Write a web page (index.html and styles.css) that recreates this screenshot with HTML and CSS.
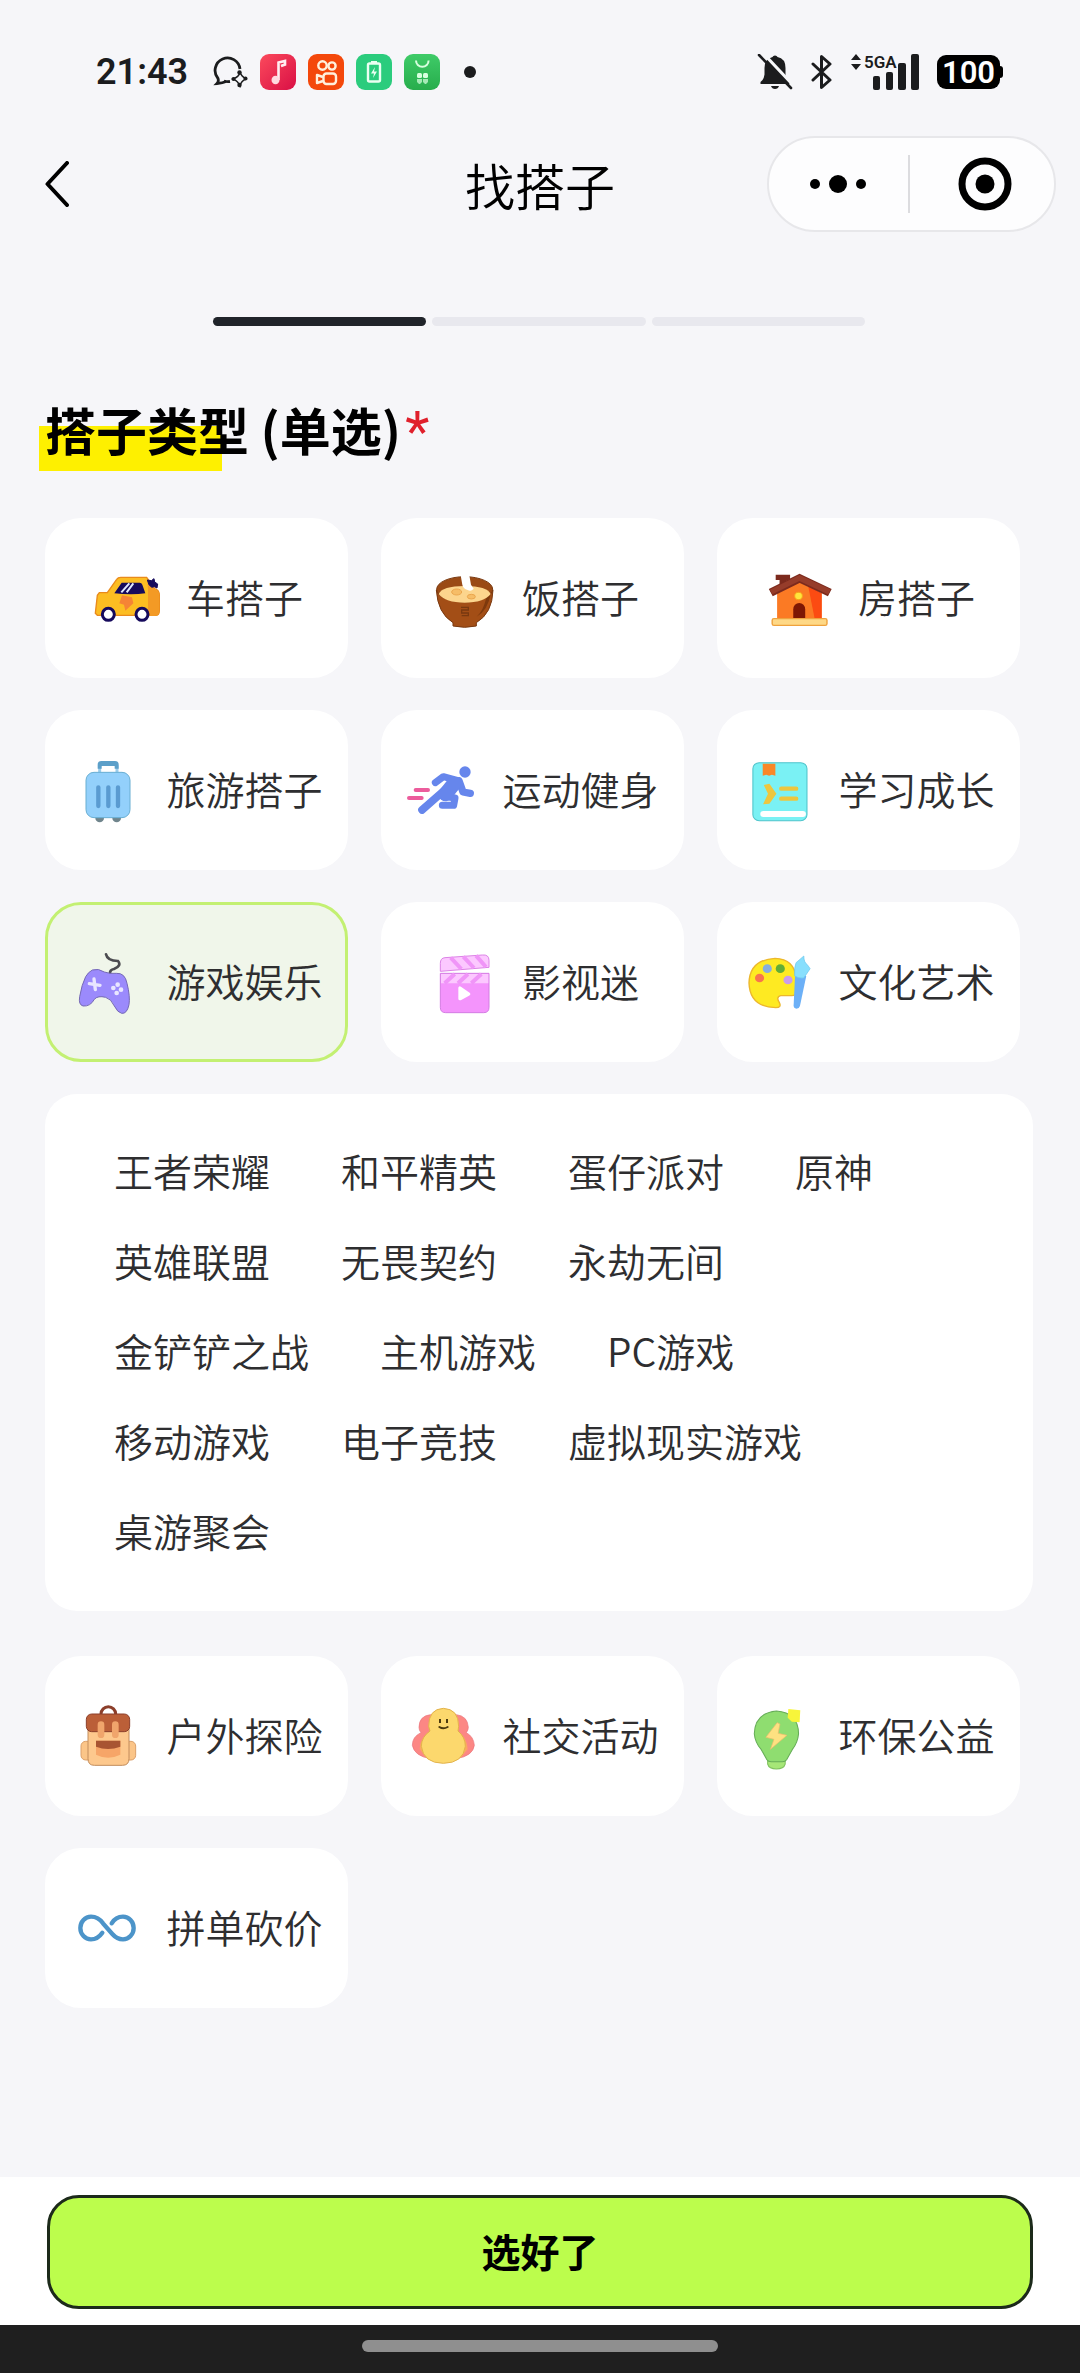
FILE: index.html
```html
<!DOCTYPE html>
<html lang="zh-CN">
<head>
<meta charset="utf-8">
<meta name="viewport" content="width=device-width, initial-scale=1">
<title>找搭子</title>
<link rel="stylesheet" href="styles.css">
</head>
<body>
<div class="status-bar">
  <div class="status-left">
    <span class="clock">21:43</span>
    <svg class="chat-icon" viewBox="0 0 36 32" aria-hidden="true"><path d="M14 25.500Q11 27 5 27.500Q7 25.500 6 22.500A12.500 12.500 0 1 1 28 13" fill="none" stroke="#1b1c1e" stroke-width="2.800"/><path d="M12 25q3 1 6 .500" fill="none" stroke="#1b1c1e" stroke-width="2.800"/><path d="M28 16q1 4 6 7q-5 2-6 7q-2-5-7-7q6-2 7-7z" fill="none" stroke="#1b1c1e" stroke-width="1.400"/><g fill="#1b1c1e"><circle cx="27.500" cy="16.500" r="2.200"/><circle cx="33.500" cy="22.500" r="2"/><circle cx="27.500" cy="29" r="2.200"/><circle cx="21.500" cy="23" r="2"/></g></svg>
    <svg class="app-icon" viewBox="0 0 36 36" aria-hidden="true"><defs><linearGradient id="music" x1="0" y1="0" x2="1" y2="1"><stop offset="0" stop-color="#fb4a5c"/><stop offset="1" stop-color="#d90f45"/></linearGradient></defs><rect width="36" height="36" rx="9" fill="url(#music)"/><path d="M18.500 26V8.500L25 7v3.500l-4 1.500" fill="none" stroke="#ffeef0" stroke-width="2.600"/><ellipse cx="15.500" cy="26" rx="4" ry="4.300" fill="#ffd9df"/></svg>
    <svg class="app-icon" viewBox="0 0 36 36" aria-hidden="true"><rect width="36" height="36" rx="9" fill="#f4480b"/><g fill="none" stroke="#fff0dc" stroke-width="2.400"><circle cx="14.500" cy="11.500" r="4.200"/><circle cx="24" cy="12" r="3.600"/><rect x="15.500" y="19.500" width="12.500" height="10.500" rx="3"/><path d="M15 23l-6-2v8l6-2" stroke-linejoin="round"/></g></svg>
    <svg class="app-icon" viewBox="0 0 36 36" aria-hidden="true"><rect width="36" height="36" rx="9" fill="#2bcc7d"/><rect x="12" y="9.500" width="12" height="18" rx="1.500" fill="none" stroke="#eafff2" stroke-width="2.400"/><path d="M15 7h6v2h-6z" fill="#eafff2"/><path d="M19 13l-4 6.500h3l-1 4.500 4-6.500h-3z" fill="#eafff2"/></svg>
    <svg class="app-icon" viewBox="0 0 36 36" aria-hidden="true"><defs><linearGradient id="bag" x1="0" y1="0" x2="0" y2="1"><stop offset="0" stop-color="#3fcb68"/><stop offset="1" stop-color="#27ad4c"/></linearGradient></defs><rect width="36" height="36" rx="9" fill="url(#bag)"/><path d="M12 6.500a6.300 6.300 0 0 0 12.600 0" fill="none" stroke="#d8ffdf" stroke-width="2"/><g fill="#d8ffdf"><rect x="13" y="19" width="5" height="5" rx="1.500"/><rect x="19" y="19" width="5" height="5" rx="1.500"/><path d="M13 25h5v3l-2 2h-1l-2-2zM19 25h5v3l-2 2h-1l-2-2z" opacity=".7"/></g></svg>
    <span class="more-dot"></span>
  </div>
  <div class="status-right">
    <svg class="bell-icon" viewBox="0 0 36 36" aria-hidden="true"><path d="M18 1.500q2 0 2.500 1.500q8 1.500 8 11v6.500q1 5 4 7.500v2H3.500v-2q3.500-2.500 4-7.500V14q0-9 8-11q.500-1.500 2.500-1.500z" fill="#1b1c1e"/><path d="M14 32h8q-1 3-4 3t-4-3z" fill="#1b1c1e"/><path d="M6-1L36 31" stroke="#f6f7f9" stroke-width="3"/><path d="M2 1L34 34" stroke="#1b1c1e" stroke-width="2.600" stroke-linecap="round"/></svg>
    <svg class="bluetooth-icon" viewBox="0 0 22 36" aria-hidden="true"><path d="M2 10l17 16-8.500 7.500V2.500L19 10 2 26" fill="none" stroke="#1b1c1e" stroke-width="3" stroke-linecap="round" stroke-linejoin="round"/></svg>
    <div class="signal">
      <svg class="traffic-icon" viewBox="0 0 10 16" aria-hidden="true"><path d="M5 0l5 6H0zM5 16l5-6H0z" fill="#1b1c1e"/></svg>
      <span class="network">5GA</span>
      <svg class="bars-icon" viewBox="0 0 46 36" aria-hidden="true"><g fill="#1b1c1e"><rect y="22" width="7" height="14" rx="2"/><rect x="13" y="18" width="7" height="18" rx="2"/><rect x="25" y="9" width="8" height="27" rx="2"/><rect x="38" width="8" height="36" rx="2"/></g></svg>
    </div>
    <span class="battery">100</span>
  </div>
</div>

<header class="nav-bar">
  <a class="back" href="#" aria-label="返回"><svg viewBox="0 0 24 46" aria-hidden="true"><path d="M22 2L2.500 23 22 44" fill="none" stroke="#000" stroke-width="4" stroke-linecap="round" stroke-linejoin="round"/></svg></a>
  <h1 class="page-title">找搭子</h1>
  <div class="capsule">
    <button class="capsule-button" type="button" aria-label="更多"><svg class="dots-icon" viewBox="0 0 58 20" aria-hidden="true"><circle cx="6" cy="10" r="5"/><circle cx="29" cy="10" r="9"/><circle cx="52" cy="10" r="5"/></svg></button>
    <button class="capsule-button" type="button" aria-label="关闭"><svg class="target-icon" viewBox="0 0 54 54" aria-hidden="true"><circle cx="27" cy="27" r="23" fill="none" stroke="#000" stroke-width="7"/><circle cx="27" cy="27" r="9.500"/></svg></button>
  </div>
</header>

<main class="content">
  <div class="progress" role="progressbar" aria-label="步骤" aria-valuemin="1" aria-valuemax="3" aria-valuenow="1">
    <span class="step step-done"></span><span class="step"></span><span class="step"></span>
  </div>

  <h2 class="section-title" id="type-title"><span class="title-mark">搭子类型</span> (单选)<span class="required">*</span></h2>

  <div role="radiogroup" aria-labelledby="type-title">
    <div class="category-grid">
      <label class="category"><input type="radio" name="type" value="car">
        <svg class="category-icon" viewBox="180 156 216 216" aria-hidden="true"><path d="M196 310l6-54 6-8h24l28-40q4-6 12-6h78l24 34q14 4 14 20v46q0 14-12 14H202z" fill="#fcbd22" stroke="#e98a1c" stroke-width="4"/><path d="M352 204l22 34q14 4 14 20v44q0 16-14 16h-20V240z" fill="#f39a25"/><path d="M253 250l22-32h54q6 0 8 6l9 26q-40 6-93 0z" fill="#160a5c"/><path d="M274 247l24-27M290 247l20-27" stroke="#dfe8ff" stroke-width="6"/><path d="M352 210l12 2 8-6 2 10 9 6-2 12-8-4-8 2-8-8z" fill="#160a5c" stroke="#160a5c" stroke-width="3"/><path d="M276 256l30 6 4 18-24 22-4-18-14-4z" fill="#f58435"/><circle cx="235" cy="313" r="18" fill="#fff" stroke="#160a5c" stroke-width="9"/><circle cx="336" cy="313" r="18" fill="#fff" stroke="#160a5c" stroke-width="9"/></svg>
        <span class="category-name">车搭子</span></label>
      <label class="category"><input type="radio" name="type" value="meal">
        <svg class="category-icon" viewBox="1188 156 216 216" aria-hidden="true"><path d="M1219 240q4 70 50 98v10q35 8 70 0v-10q48-28 50-98z" fill="#a34e16" stroke="#793910" stroke-width="3"/><path d="M1340 320q34-20 42-68l-14 14q-8 36-28 54z" fill="#7d390d"/><ellipse cx="1304" cy="238" rx="84" ry="38" fill="#9a4a15" stroke="#793910" stroke-width="3"/><path d="M1226 252q10-24 78-24t78 24q-20 26-78 26t-78-26z" fill="#fcd58d"/><ellipse cx="1280" cy="246" rx="15" ry="9" fill="#f6bd67" stroke="#eba64d" stroke-width="3"/><ellipse cx="1324" cy="260" rx="12" ry="7" fill="#f6bd67" stroke="#eba64d" stroke-width="3"/><path d="M1292 196h26l5 28 8 12q-8 10-18 4-14-4-16-16z" fill="#fff"/><path d="M1293 292h22v8h-20v9h20v8h-20" fill="none" stroke="#793910" stroke-width="4"/></svg>
        <span class="category-name">饭搭子</span></label>
      <label class="category"><input type="radio" name="type" value="house">
        <svg class="category-icon" viewBox="661 156 205 216" preserveAspectRatio="none" aria-hidden="true"><path d="M704 250l64-34 63 34v76H704z" fill="#fb7a24"/><path d="M792 226l39 24v76h-20z" fill="#fc4b12"/><path d="M700 194h41v14l-10 4v22h-20v-24h-11z" fill="#7c2a1d"/><path d="M686 248l82-43 86 43" fill="none" stroke="#7c2a1d" stroke-width="24"/><path d="M687 246l81-42 85 42" fill="none" stroke="#963c2a" stroke-width="16"/><circle cx="765" cy="258" r="11" fill="#ffe63d" stroke="#f5a31a" stroke-width="3"/><path d="M750 326v-28a17 19 0 0 1 34 0v28z" fill="#7d1604"/><rect x="690" y="326" width="156" height="20" rx="5" fill="#fed886" stroke="#efa23d" stroke-width="4"/></svg>
        <span class="category-name">房搭子</span></label>
      <label class="category"><input type="radio" name="type" value="travel">
        <svg class="category-icon" viewBox="121 732 216 216" aria-hidden="true"><path d="M210 788v-18q0-10 10-10h32q10 0 10 10v18" fill="none" stroke="#9bcdec" stroke-width="9"/><path d="M204 776v-12q0-11 11-11h41q11 0 11 11v12h-12v-8h-39v8z" fill="#5b9fc9"/><circle cx="210" cy="924" r="13" fill="#70858c"/><circle cx="261" cy="924" r="13" fill="#70858c"/><rect x="169" y="787" width="132" height="136" rx="24" fill="#93d0fb" stroke="#68aed2" stroke-width="3"/><path d="M206 832v56M236 832v56M265 832v56" stroke="#5a9bd1" stroke-width="13" stroke-linecap="round"/></svg>
        <span class="category-name">旅游搭子</span></label>
      <label class="category"><input type="radio" name="type" value="sport">
        <svg class="category-icon" viewBox="1129 732 216 216" aria-hidden="true"><path d="M1158 840h37M1138 864h38" stroke="#ec5c9c" stroke-width="12" stroke-linecap="round"/><g fill="none" stroke="#6686ec" stroke-linecap="round" stroke-linejoin="round"><path d="M1217 818l24-18 44 12" stroke-width="21"/><path d="M1288 812l12 34 22 4" stroke-width="22"/><path d="M1252 840l-14 18 38 6-4 22h-34" stroke-width="21"/><path d="M1250 836l-73 64" stroke-width="23"/><path d="M1272 822l-24 30" stroke-width="44"/></g><circle cx="1306" cy="786" r="17" fill="#6686ec"/></svg>
        <span class="category-name">运动健身</span></label>
      <label class="category"><input type="radio" name="type" value="study">
        <svg class="category-icon" viewBox="606 732 205 216" preserveAspectRatio="none" aria-hidden="true"><rect x="637" y="758" width="154" height="174" rx="18" fill="#7af1f4" stroke="#4fc4cb" stroke-width="3"/><path d="M665 761h36v36l-10-3-8 3-8-3-10 3z" fill="#f98727"/><path d="M668 825l16-4 20 30-20 30-18 2 14-32z" fill="#edc63e"/><path d="M718 836h42M718 866h42" stroke="#edc63e" stroke-width="13" stroke-linecap="round"/><path d="M667 912h112" stroke="#fff" stroke-width="18" stroke-linecap="round"/></svg>
        <span class="category-name">学习成长</span></label>
      <label class="category"><input type="radio" name="type" value="game" checked>
        <svg class="category-icon" viewBox="121 168 216 216" aria-hidden="true"><path d="M229 193q4 20 36 20 12 14-12 24-12 2-12 12" fill="none" stroke="#4c4c50" stroke-width="8" stroke-linecap="round"/><path d="M188 240q18-6 36 6 16 6 36 4 26-2 32 30 10 40 6 64-6 28-22 26-12-2-22-22-10-22-26-26-24-6-34 6-12 22-34 20-14-4-10-28 6-36 18-60 8-14 20-20z" fill="#9b8afc" stroke="#7569b5" stroke-width="3"/><path d="M193 267l4 32M179 281l32 5" stroke="#e9e6ff" stroke-width="10" stroke-linecap="round"/><g fill="#e9e6ff"><circle cx="264" cy="284" r="7"/><circle cx="251" cy="294" r="7"/><circle cx="274" cy="299" r="7"/><circle cx="261" cy="309" r="7"/></g></svg>
        <span class="category-name">游戏娱乐</span></label>
      <label class="category"><input type="radio" name="type" value="film">
        <svg class="category-icon" viewBox="1188 168 216 216" aria-hidden="true"><path d="M1231 244v-24q0-16 14-17l112-8q20-2 20 16v21z" fill="#fcc8ff" stroke="#dc83e6" stroke-width="3"/><path d="M1262 203l32 34M1300 200l32 34M1338 197l30 34" stroke="#f095f8" stroke-width="12"/><path d="M1231 250h146v102q0 16-16 16h-114q-16 0-16-16z" fill="#f494fc" stroke="#d47ce3" stroke-width="3"/><path d="M1233 252h142v28h-142z" fill="#fcc8ff"/><path d="M1274 252l-30 28M1314 252l-30 28M1354 252l-30 28" stroke="#f095f8" stroke-width="12"/><path d="M1290 294v32l26-14z" fill="#fff" stroke="#fff" stroke-width="10" stroke-linejoin="round"/></svg>
        <span class="category-name">影视迷</span></label>
      <label class="category"><input type="radio" name="type" value="art">
        <svg class="category-icon" viewBox="606 168 205 216" preserveAspectRatio="none" aria-hidden="true"><path d="M700 205q56 2 60 60v42q0 10-12 10h-32q-14 4-4 20 8 16-10 16-74-2-76-74 2-70 74-74z" fill="#feea22" stroke="#ecb72d" stroke-width="4"/><circle cx="656" cy="264" r="13" fill="#f8744e"/><circle cx="678" cy="236" r="13" fill="#87aedd"/><circle cx="715" cy="236" r="13" fill="#62ad36"/><circle cx="737" cy="270" r="13" fill="#cb9cea"/><path d="M757 258h32l-18 90q-2 8-10 8t-8-10z" fill="#6cb0f7"/><path d="M782 198q0 20 10 26l8 12-18 28q-16 2-26-6-2-26 4-40z" fill="#88dffd" stroke="#6ac6ec" stroke-width="2"/></svg>
        <span class="category-name">文化艺术</span></label>
    </div>

    <div class="tag-panel">
      <button class="tag" type="button">王者荣耀</button>
      <button class="tag" type="button">和平精英</button>
      <button class="tag" type="button">蛋仔派对</button>
      <button class="tag" type="button">原神</button>
      <button class="tag" type="button">英雄联盟</button>
      <button class="tag" type="button">无畏契约</button>
      <button class="tag" type="button">永劫无间</button>
      <button class="tag" type="button">金铲铲之战</button>
      <button class="tag" type="button">主机游戏</button>
      <button class="tag" type="button">PC游戏</button>
      <button class="tag" type="button">移动游戏</button>
      <button class="tag" type="button">电子竞技</button>
      <button class="tag" type="button">虚拟现实游戏</button>
      <button class="tag" type="button">桌游聚会</button>
    </div>

    <div class="category-grid">
      <label class="category"><input type="radio" name="type" value="outdoor">
        <svg class="category-icon" viewBox="121 180 216 216" aria-hidden="true"><circle cx="236" cy="222" r="22" fill="none" stroke="#8c3f2b" stroke-width="9"/><rect x="154" y="304" width="40" height="56" rx="14" fill="#fbc588" stroke="#dba06a" stroke-width="3"/><rect x="278" y="304" width="40" height="56" rx="14" fill="#fbc588" stroke="#dba06a" stroke-width="3"/><path d="M175 250h123v106q0 20-20 20h-84q-19 0-19-20z" fill="#fdc88d" stroke="#c28c5c" stroke-width="3"/><rect x="170" y="222" width="130" height="53" rx="16" fill="#bb5f38" stroke="#8c3f2b" stroke-width="3"/><path d="M214 254v30M257 254v30" stroke="#f0a56c" stroke-width="20" stroke-linecap="round"/><path d="M199 302h73v42q-37 18-73 0z" fill="#f6a568"/><path d="M199 302h73v18q-37 14-73 0z" fill="#a85432"/></svg>
        <span class="category-name">户外探险</span></label>
      <label class="category"><input type="radio" name="type" value="social">
        <svg class="category-icon" viewBox="1129 180 216 216" aria-hidden="true"><path d="M1202 224q-34 4-34 38 0 10 6 16-26 12-26 38 6 32 54 40h78q50-8 54-40-2-26-24-38 6-8 6-16-2-34-36-38z" fill="#fc8784" stroke="#e87078" stroke-width="2"/><path d="M1196 262l4 14q-30 18-30 52l20 24h104l20-24q-2-36-28-52z" fill="#fca663"/><path d="M1241 205q46 2 46 54l-2 14q22 18 22 46-6 50-66 51-60-1-66-51 0-28 26-46l-4-14q0-52 44-54z" fill="#fcd86d" stroke="#e3b34b" stroke-width="3"/><path d="M1231 237v12M1252 237v12" stroke="#4b3a0e" stroke-width="6"/><path d="M1229 261q12 8 25 0" fill="none" stroke="#4b3a0e" stroke-width="6" stroke-linecap="round"/></svg>
        <span class="category-name">社交活动</span></label>
      <label class="category"><input type="radio" name="type" value="eco">
        <svg class="category-icon" viewBox="606 180 205 216" preserveAspectRatio="none" aria-hidden="true"><path d="M679 358h50v14q-4 15-25 15t-25-15z" fill="#a6e777" stroke="#80c35f" stroke-width="3"/><path d="M704 213q62 4 63 68-2 26-18 48l-16 30q-4 6-12 6h-32q-8 0-12-6l-16-30q-18-22-20-48 2-62 63-68z" fill="#8fdd70" stroke="#66ad57" stroke-width="3"/><path d="M706 248l-32 44 23 6-10 30 47-42-25-6 5-28z" fill="#fee181" stroke="#eebc6c" stroke-width="2"/><path d="M738 207l34 4-2 36-22-2-12-12z" fill="#f7f53a"/></svg>
        <span class="category-name">环保公益</span></label>
      <label class="category"><input type="radio" name="type" value="groupbuy">
        <svg class="category-icon" viewBox="121 756 216 216" aria-hidden="true"><path d="M218 878q-14 20-34 20a32 34 0 0 1 0-68q22 0 36 20l28 32q14 16 32 16a32 34 0 0 0 0-68q-22 0-34 20" fill="none" stroke="#4c94c9" stroke-width="13" stroke-linecap="round"/></svg>
        <span class="category-name">拼单砍价</span></label>
    </div>
  </div>
</main>

<footer class="action-bar">
  <button class="submit" type="button">选好了</button>
</footer>
<div class="gesture-bar"><span class="gesture-handle"></span></div>
</body>
</html>
```
FILE: styles.css
```css
* {
  box-sizing: border-box;
}

body {
  margin: 0;
  min-height: 100vh;
  display: flex;
  flex-direction: column;
  background: #f6f6f9;
  color: #2e2e30;
  font-family: "Noto Sans CJK SC", sans-serif;
  font-size: 39px;
  font-weight: 350;
}

svg {
  display: block;
}

button {
  padding: 0;
  border: 0;
  background: none;
  color: inherit;
  font: inherit;
}

/* System status bar */
.status-bar {
  display: flex;
  justify-content: space-between;
  padding: 54px 77px 0 96px;
  color: #1b1c1e;
}

.status-left,
.status-right {
  display: flex;
  align-items: center;
  height: 36px;
}

.status-left {
  gap: 12px;
}

.clock {
  margin-right: 12px;
  font: 600 36px/36px Roboto, sans-serif;
}

.chat-icon {
  width: 36px;
  height: 32px;
}

.app-icon {
  width: 36px;
  height: 36px;
}

.more-dot {
  width: 12px;
  height: 12px;
  margin-left: 12px;
  border-radius: 50%;
  background: #1b1c1e;
}

.status-right {
  gap: 18px;
}

.bell-icon {
  width: 36px;
  height: 36px;
}

.bluetooth-icon {
  width: 22px;
  height: 36px;
}

.signal {
  display: grid;
  grid-template-columns: 10px 12px 46px;
  height: 36px;
}

.traffic-icon {
  width: 10px;
  height: 16px;
}

.network {
  grid-area: 1 / 2 / 2 / 4;
  padding-left: 3px;
  font: 600 17px/16px Roboto, sans-serif;
}

.bars-icon {
  grid-area: 1 / 3;
  width: 46px;
  height: 36px;
}

.battery {
  position: relative;
  width: 63px;
  height: 34px;
  margin-right: 3px;
  border-radius: 9px;
  background: #000;
  color: #fff;
  font: 600 31px/35px Roboto, sans-serif;
  text-align: center;
}

.battery::after {
  content: "";
  position: absolute;
  top: 11px;
  left: 100%;
  width: 3px;
  height: 12px;
  border-radius: 0 3px 3px 0;
  background: #000;
}

/* Navigation */
.nav-bar {
  display: grid;
  grid-template-columns: 1fr auto 1fr;
  align-items: center;
  margin-top: 46px;
  padding: 0 24px 0 45px;
}

.back {
  width: 24px;
}

.page-title {
  margin: 0 0 0 -21px;
  color: #000;
  font-size: 50px;
  font-weight: 350;
  line-height: 60px;
}

.capsule {
  display: flex;
  justify-self: end;
  align-items: center;
  width: 289px;
  height: 96px;
  border: 2px solid #e7e7ea;
  border-radius: 48px;
  background: #fdfdfe;
}

.capsule-button {
  display: flex;
  flex: 1;
  align-items: center;
  justify-content: center;
  height: 58px;
}

.capsule-button + .capsule-button {
  padding-left: 6px;
  border-left: 2px solid #dcdcdf;
}

.dots-icon {
  width: 58px;
  height: 20px;
}

.target-icon {
  width: 54px;
  height: 54px;
}

/* Page content */
.content {
  flex: 1;
  padding: 85px 47px 48px 45px;
}

.progress {
  display: flex;
  gap: 6px;
  width: 66%;
  margin: 0 auto;
}

.step {
  flex: 1;
  height: 9px;
  border-radius: 5px;
  background: #e8e8ee;
}

.step-done {
  background: #20242a;
}

.section-title {
  margin: 73px 0 59px;
  color: #000;
  font-size: 51px;
  font-weight: 700;
  line-height: 60px;
}

.title-mark {
  position: relative;
  z-index: 0;
}

.title-mark::before {
  content: "";
  position: absolute;
  z-index: -1;
  left: -6px;
  right: 27px;
  bottom: -5px;
  height: 45px;
  background: #fef000;
}

.required {
  margin-left: 4px;
  color: #e0202c;
  font: 400 56px/1px Roboto, sans-serif;
}

.category-grid {
  display: grid;
  grid-template-columns: repeat(3, 1fr);
  gap: 32px 33px;
  margin-right: 13px;
}

.category {
  position: relative;
  display: flex;
  align-items: center;
  justify-content: center;
  gap: 24px;
  height: 160px;
  border: 3px solid #fff;
  border-radius: 36px;
  background: #fff;
  line-height: 58px;
  white-space: nowrap;
}

.category:has(input:checked) {
  border-color: #c3f072;
  background: #f0f6ea;
}

.category input {
  position: absolute;
  inset: 0;
  margin: 0;
  opacity: 0;
}

.category-icon {
  width: 72px;
  height: 72px;
}

.category-name {
  padding-bottom: 4px;
}

.tag-panel {
  display: flex;
  flex-wrap: wrap;
  gap: 32px 71px;
  margin: 32px 0 45px;
  padding: 47px 100px 52px 69px;
  border-radius: 32px;
  background: #fff;
}

.tag {
  line-height: 58px;
}

/* Bottom action */
.action-bar {
  padding: 18px 47px 16px;
  background: #fff;
}

.submit {
  width: 100%;
  height: 114px;
  padding-bottom: 4px;
  border: 3px solid #1c2a1a;
  border-radius: 32px;
  background: #bcfd4c;
  color: #000;
  font-weight: 700;
}

.gesture-bar {
  display: flex;
  justify-content: center;
  padding: 15px 0 21px;
  background: #1f1f1f;
}

.gesture-handle {
  width: 33%;
  height: 12px;
  border-radius: 6px;
  background: #8f8f8f;
}
```
